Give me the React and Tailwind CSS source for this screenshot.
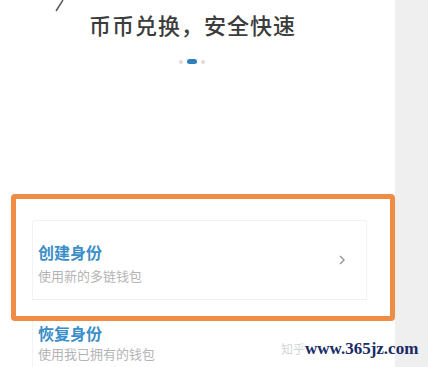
export default function App() {
  return (
    <div
      className="relative flex h-[367px] w-[428px] overflow-hidden bg-[#efefef]"
      style={{ fontFamily: '"Noto Sans CJK SC", "Noto Sans", sans-serif' }}
    >
      {/* 页面主体 */}
      <div className="relative flex w-[395px] flex-col bg-white">
        {/* 顶部插图残留的线条 */}
        <svg className="absolute left-[54px] top-0" width="12" height="12" viewBox="0 0 12 12">
          <line x1="2" y1="11" x2="9" y2="0" stroke="#555" strokeWidth="1.4" />
        </svg>

        <h1 className="mt-[8px] pr-[10px] text-center text-[22px] font-medium leading-[32px] tracking-[1px] text-[#3c3c3c]">
          币币兑换，安全快速
        </h1>

        {/* 轮播指示点 */}
        <div className="mt-[19px] flex items-center justify-center gap-[4px] pr-[12px]">
          <span className="h-[4px] w-[4px] rounded-full bg-[#dcdcdc]" />
          <span className="h-[5px] w-[10px] rounded-full bg-[#2f7fc0]" />
          <span className="h-[4px] w-[4px] rounded-full bg-[#dcdcdc]" />
        </div>

        {/* 高亮框 */}
        <div className="ml-[11px] mt-[130px] h-[127px] w-[384px] rounded-[4px] border-[5px] border-[#f08c44] bg-white pl-[16px] pr-[23px] pt-[21px]">
          <div className="flex h-[79px] items-center rounded-t-[3px] border border-b-0 border-[#f3f3f3] pl-[5px] pr-[20px]">
            <div className="flex-1 pt-[5px]">
              <div className="text-[16px] font-bold leading-[22px] text-[#3a8ec9]">创建身份</div>
              <div className="mt-[4px] text-[13px] leading-[18px] text-[#b4b4b4]">使用新的多链钱包</div>
            </div>
            <svg width="8" height="12" viewBox="0 0 8 12">
              <path d="M2 2l4 4-4 4" fill="none" stroke="#9a9a9a" strokeWidth="1.5" />
            </svg>
          </div>
          <div className="h-px bg-[#f0f0f0]" />
        </div>

        {/* 恢复身份 */}
        <div className="ml-[32px] flex-1 border-l border-[#f3f3f3] pl-[5px] pt-[1px]">
          <div className="text-[16px] font-bold leading-[22px] text-[#3a8ec9]">恢复身份</div>
          <div className="mt-[1px] text-[13px] leading-[18px] text-[#b4b4b4]">使用我已拥有的钱包</div>
        </div>
      </div>

      {/* 水印 */}
      <div className="absolute left-[281px] top-[339px] flex items-center whitespace-nowrap">
        <span className="text-[12px] leading-[16px] text-[#d4d4d4]">知乎</span>
        <span
          className="text-[17px] font-bold leading-[20px] text-[#1a2b66]"
          style={{ fontFamily: '"Liberation Serif", serif' }}
        >
          www.365jz.com
        </span>
      </div>
    </div>
  );
}
